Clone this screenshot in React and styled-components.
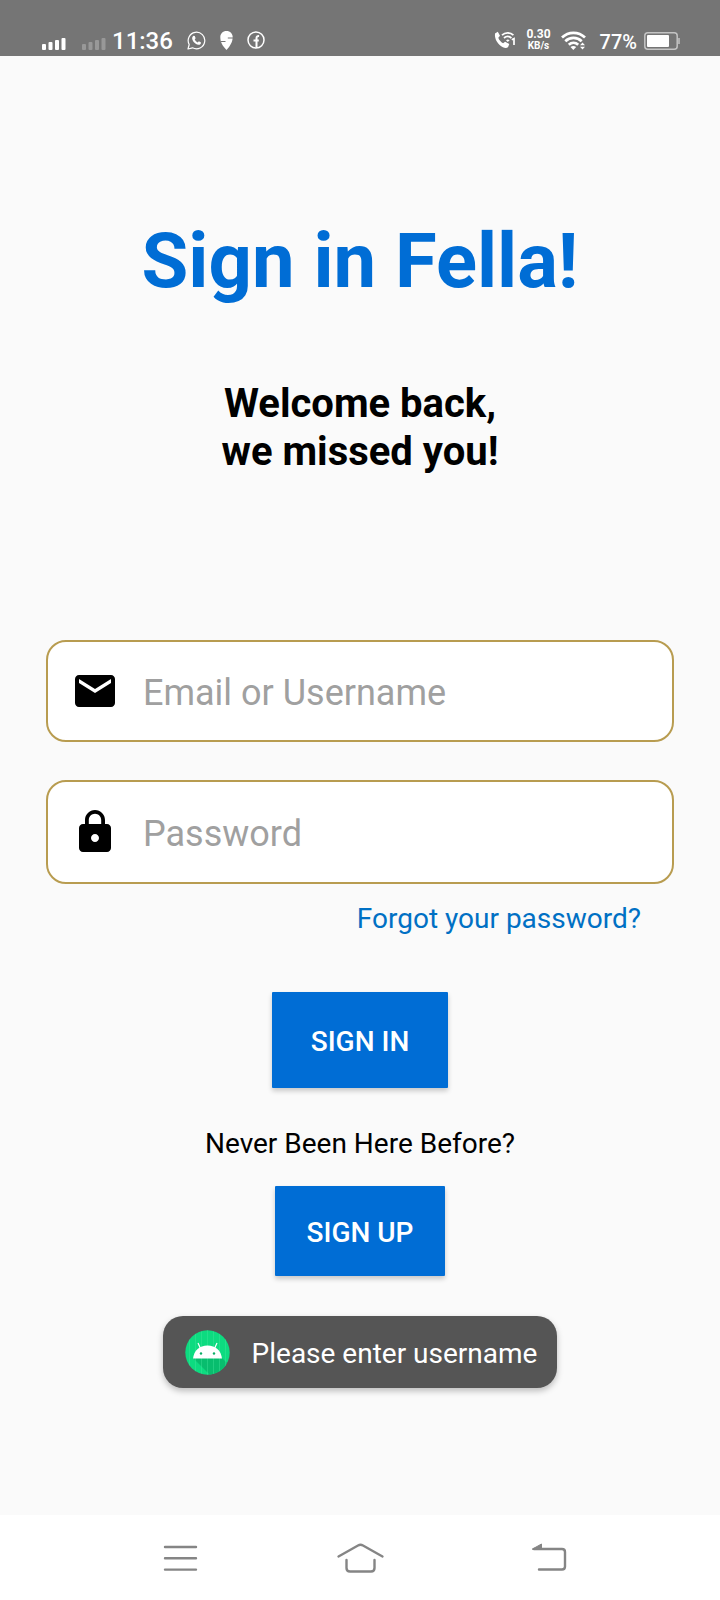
import React from "react";
import styled, { createGlobalStyle } from "styled-components";
import { MdEmail, MdLock } from "react-icons/md";

const GlobalStyle = createGlobalStyle`
  *, *::before, *::after { box-sizing: border-box; }
  body {
    margin: 0;
    background: #fafafa;
    font-family: Roboto, "Liberation Sans", sans-serif;
    color: #000;
  }
`;

const Screen = styled.div`
  display: flex;
  flex-direction: column;
  min-height: 100vh;
`;

const StatusBar = styled.header`
  display: flex;
  justify-content: space-between;
  height: 56px;
  padding: 24px 40px 0 42px;
  background: #757575;
  color: #fff;
`;

const StatusGroup = styled.div`
  display: flex;
  align-items: center;
  height: 32px;
  gap: ${(p) => p.$gap}px;

  svg { display: block; flex: none; }
`;

const Signals = styled.div`
  display: flex;
  gap: 16px;
  padding-top: 8px;
`;

const Clock = styled.time`
  padding-top: 2px;
  margin: 0 0 0 -8px;
  font-size: 24px;
  line-height: 32px;
  font-weight: 500;
`;

const NetSpeed = styled.div`
  font-size: 12px;
  line-height: 11px;
  font-weight: 700;
  text-align: center;

  small { display: block; font-size: 10px; }
`;

const BatteryGroup = styled.div`
  display: flex;
  align-items: center;
  gap: 7px;
  margin-left: 4px;
  font-size: 20px;
  line-height: 32px;
  font-weight: 500;

  span { padding-top: 4px; }
  svg { margin-top: 2px; }
`;

const Main = styled.main`
  flex: 1;
  display: flex;
  flex-direction: column;
  align-items: center;
  padding: 161px 46px 40px;
`;

const Title = styled.h1`
  margin: 0;
  font-size: 76px;
  line-height: 88px;
  font-weight: 700;
  color: #006dd5;
`;

const Subtitle = styled.p`
  margin: 75px 0 0;
  font-size: 40px;
  line-height: 48px;
  font-weight: 700;
  text-align: center;
`;

const Form = styled.form`
  display: flex;
  flex-direction: column;
  align-items: center;
  width: 100%;
  margin-top: 164px;
`;

const Field = styled.label`
  display: flex;
  align-items: center;
  gap: 24px;
  width: 100%;
  height: ${(p) => p.$height}px;
  padding: 0 23px;
  border: 2px solid #b89c50;
  border-radius: 20px;
  background: #fff;

  & + & { margin-top: 38px; }
  svg { flex: none; }
`;

const Input = styled.input`
  flex: 1;
  min-width: 0;
  height: 48px;
  padding: 4px 0 0;
  border: 0;
  outline: 0;
  background: transparent;
  font: 400 36px/44px Roboto, "Liberation Sans", sans-serif;
  color: #000;

  &::placeholder { color: #a0a0a0; opacity: 1; }
`;

const ForgotLink = styled.a`
  align-self: flex-end;
  margin: 19px 33px 0 0;
  font-size: 28px;
  line-height: 32px;
  color: #0070c4;
  text-decoration: none;
`;

const Button = styled.button`
  width: ${(p) => p.$width}px;
  height: ${(p) => p.$height}px;
  margin-top: ${(p) => p.$top}px;
  padding: 3px 0 0;
  border: 0;
  border-radius: 1px;
  background: #006dd5;
  box-shadow: 0 3px 5px rgba(0, 0, 0, 0.2);
  color: #fff;
  font: 500 28px/32px Roboto, "Liberation Sans", sans-serif;
`;

const Prompt = styled.p`
  margin: 40px 0 0;
  font-size: 28px;
  line-height: 32px;
`;

const Toast = styled.div`
  display: flex;
  align-items: center;
  gap: 22px;
  height: 72px;
  margin-top: 40px;
  padding: 0 20px 0 22px;
  border-radius: 20px;
  background: #555;
  box-shadow: 0 3px 6px rgba(0, 0, 0, 0.25);
  color: #fff;
  font-size: 28px;
  line-height: 32px;

  span { padding-top: 3px; }
`;

const NavBar = styled.nav`
  display: flex;
  justify-content: space-between;
  align-items: center;
  height: 85px;
  padding: 0 20%;
  background: #fff;
`;

const NavButton = styled.button`
  width: 72px;
  height: 48px;
  padding: 0;
  border: 0;
  background: transparent;
  color: #858585;

  svg { display: block; }
`;

function SignalIcon({ dim }) {
  return (
    <svg width="24" height="12" viewBox="0 0 24 12" fill="#fff" opacity={dim ? 0.25 : 1}>
      <rect x="0" y="6" width="4" height="6" rx="1" />
      <rect x="6.5" y="4" width="4" height="8" rx="1" />
      <rect x="13" y="2" width="4" height="10" rx="1" />
      <rect x="19.5" y="0" width="4" height="12" rx="1" />
    </svg>
  );
}

function WhatsAppIcon() {
  return (
    <svg width="19" height="19" viewBox="0 0 19 19" fill="none" stroke="#fff">
      <path d="M1 18 2.200 13.500A8.300 8.300 0 1 1 5.500 16.800z" strokeWidth="1.200" strokeLinejoin="round" />
      <path d="M6.500 4.800 7.800 5 8.600 7.200 7.700 8.400C8.300 9.700 9.300 10.700 10.700 11.400L11.900 10.300 14 11.400C14 13 12.800 13.900 11.400 13.700 8.200 13.200 5.700 10.500 5.200 7.700 5 6.500 5.700 5.300 6.500 4.800z" fill="#fff" stroke="none" />
    </svg>
  );
}

function PinIcon() {
  return (
    <svg width="13" height="19" viewBox="0 0 13 19">
      <path d="M6.500 0C2.800 0 .3 2.700.3 6c0 2.500.4 4.500 1.500 6.800C2.900 15.200 4.800 17.300 6.500 19c2.900-3.200 6.200-7.500 6.200-13C12.700 2.700 10.200 0 6.500 0z" fill="#fff" />
      <path d="M13 7H7.800M1 10.500h4.500" stroke="#757575" strokeWidth="1" />
    </svg>
  );
}

function FacebookIcon() {
  return (
    <svg width="18" height="18" viewBox="0 0 18 18" fill="none" stroke="#fff">
      <circle cx="9" cy="9" r="8" strokeWidth="1.500" />
      <path d="M9.500 17V7.200c0-1.600.8-2.300 2.600-2.200M6.500 9.500h5.300" strokeWidth="2" />
    </svg>
  );
}

function WifiCallIcon() {
  return (
    <svg width="22" height="18" viewBox="0 0 22 18" fill="none" stroke="#fff">
      <path d="M1 2.500 3.800.8 6 4.800 4.300 6.800c.8 2.300 2.500 4.200 4.800 5.400l2-1.500 4.200 2.300-1.200 3c-1 1.200-3 1.300-5.200.3C4.500 14 .2 8.500 1 2.500z" fill="#fff" stroke="none" />
      <path d="M8 4.200c3.200-3.100 8.200-3.100 11.400 0M10 7c2.200-2 5.200-2 7.400 0" strokeWidth="1.800" />
      <path d="M12 9.300c1.200-1 2.400-1 3.600 0L13.800 11z" fill="#fff" stroke="none" />
      <path d="M17.800 8.800 20 7.600V14" strokeWidth="1.700" />
    </svg>
  );
}

function WifiIcon() {
  return (
    <svg width="25" height="19" viewBox="0 0 25 19" fill="none" stroke="#fff">
      <path d="M1 6.500c6.400-6.300 16.600-6.300 23 0M4.300 10.200c4.600-4.500 11.800-4.500 16.400 0M7.800 13.700c2.800-2.600 6.600-2.600 9.400 0" strokeWidth="2.700" />
      <path d="M9.500 16c1.700-1.500 4-1.500 5.700 0l-2.900 3z" fill="#fff" stroke="none" />
      <path d="M19 14.300 21.500 11.500 24 14.300zM19 15.800h5l-2.500 2.800z" fill="#fff" stroke="none" />
    </svg>
  );
}

function BatteryIcon() {
  return (
    <svg width="36" height="18" viewBox="0 0 36 18">
      <rect x=".8" y=".8" width="32.400" height="16.400" rx="3" fill="none" stroke="#c4c4c4" strokeWidth="1.500" />
      <rect x="3" y="3" width="22" height="12" rx="1" fill="#fff" />
      <path d="M35 6v6" stroke="#c4c4c4" strokeWidth="1.500" />
    </svg>
  );
}

function AndroidIcon() {
  return (
    <svg width="45" height="45" viewBox="0 0 45 45">
      <clipPath id="disc"><circle cx="22.500" cy="22.500" r="22.200" /></clipPath>
      <g clipPath="url(#disc)">
        <path d="M0 0h45v45H0z" fill="#0ddb80" />
        <path d="M8 28 25 45h20V36L35 26z" fill="#08bd6e" />
        <path d="M4.500 0v45M10.500 0v45M16.500 0v45M22.500 0v45M28.500 0v45M34.500 0v45M40.500 0v45" stroke="#46e79f" strokeWidth=".4" />
      </g>
      <path d="M8 28.500C9 20.500 14.500 15.500 22.500 15.500S36 20.500 37 28.500z" fill="#fff" />
      <path d="M15.500 18.500 13 13M29.500 18.500 32 13" stroke="#fff" strokeWidth="1.200" />
      <circle cx="16" cy="23.500" r="1.200" fill="#0cae66" />
      <circle cx="29" cy="23.500" r="1.200" fill="#0cae66" />
    </svg>
  );
}

function NavIcon({ children }) {
  return (
    <svg width="72" height="48" viewBox="0 0 72 48" fill="none" stroke="currentColor" strokeWidth="2.400" strokeLinecap="round" strokeLinejoin="round">
      {children}
    </svg>
  );
}

export default function App() {
  return (
    <Screen>
      <GlobalStyle />
      <StatusBar>
        <StatusGroup $gap={14}>
          <Signals>
            <SignalIcon />
            <SignalIcon dim />
          </Signals>
          <Clock>11:36</Clock>
          <WhatsAppIcon />
          <PinIcon />
          <FacebookIcon />
        </StatusGroup>
        <StatusGroup $gap={10}>
          <WifiCallIcon />
          <NetSpeed>0.30<small>KB/s</small></NetSpeed>
          <WifiIcon />
          <BatteryGroup>
            <span>77%</span>
            <BatteryIcon />
          </BatteryGroup>
        </StatusGroup>
      </StatusBar>

      <Main>
        <Title>Sign in Fella!</Title>
        <Subtitle>Welcome back,<br />we missed you!</Subtitle>

        <Form onSubmit={(e) => e.preventDefault()}>
          <Field htmlFor="username" $height={102}>
            <MdEmail size={48} />
            <Input id="username" type="text" aria-label="Email or Username" placeholder="Email or Username" />
          </Field>
          <Field htmlFor="password" $height={104}>
            <MdLock size={48} />
            <Input id="password" type="password" aria-label="Password" placeholder="Password" />
          </Field>
          <ForgotLink href="#forgot">Forgot your password?</ForgotLink>
          <Button type="submit" $width={176} $height={96} $top={57}>SIGN IN</Button>
        </Form>

        <Prompt>Never Been Here Before?</Prompt>
        <Button type="button" $width={170} $height={90} $top={26}>SIGN UP</Button>

        <Toast role="status">
          <AndroidIcon />
          <span>Please enter username</span>
        </Toast>
      </Main>

      <NavBar>
        <NavButton type="button" aria-label="Recent apps">
          <NavIcon><path d="M21 13h31M21 24.300h31M21 35.600h31" /></NavIcon>
        </NavButton>
        <NavButton type="button" aria-label="Home">
          <NavIcon>
            <path d="M14.500 22.500 34 11.500q2.500-1.400 5 0L58.500 22.500" />
            <path d="M22.500 26v8q0 3.500 3.500 3.500h21q3.500 0 3.500-3.500v-8" />
          </NavIcon>
        </NavButton>
        <NavButton type="button" aria-label="Back">
          <NavIcon>
            <path d="M30 15h28q3 0 3 3v14.500q0 3-3 3H35" />
            <path d="M28.500 15 37.500 10v5z" fill="currentColor" strokeWidth="1" />
          </NavIcon>
        </NavButton>
      </NavBar>
    </Screen>
  );
}
